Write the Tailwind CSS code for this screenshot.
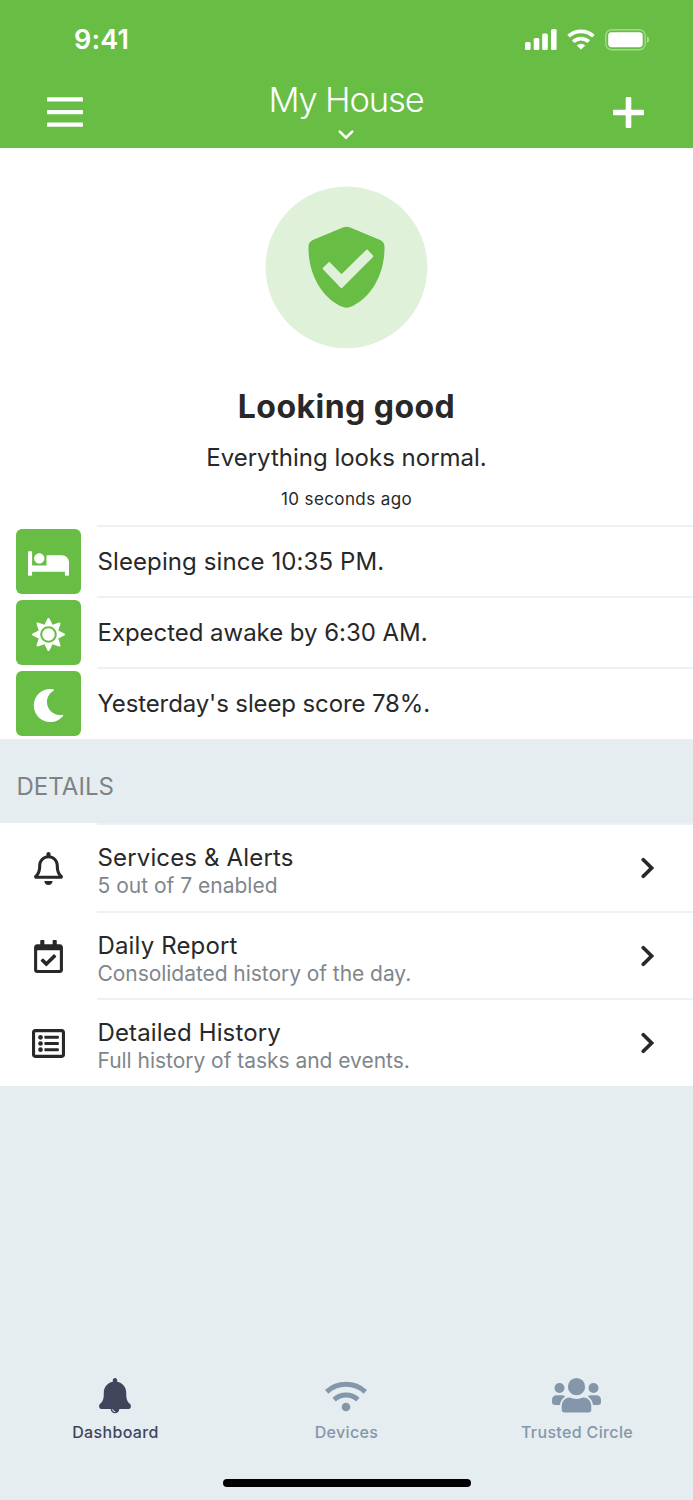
<!DOCTYPE html>
<html lang="en">
<head>
<meta charset="utf-8">
<title>My House</title>
<script src="https://cdn.jsdelivr.net/npm/@tailwindcss/browser@4"></script>
</head>
<body class="bg-[#e5edf1]">
<div class="w-[693px] h-[1500px] flex flex-col overflow-hidden font-['Inter',sans-serif] text-[#282829] bg-[#e5edf1] whitespace-nowrap">
  <header class="h-[148px] shrink-0 bg-[#68bd45] text-white flex flex-col">
    <div class="h-[78px] shrink-0 flex items-center justify-between pl-[74px] pr-[44.500px] pt-[1px]">
      <span class="text-[27px] leading-[30px] font-semibold tracking-[0.200px] pt-[1px]">9:41</span>
      <div class="flex items-center">
        <svg class="w-[32px] h-[21px]" viewBox="0 0 32 21" fill="currentColor"><rect x="0" y="13" width="5.6" height="8" rx="1.5"/><rect x="8.7" y="9" width="5.6" height="12" rx="1.5"/><rect x="17.2" y="4.4" width="5.6" height="16.6" rx="1.5"/><rect x="26" y="0" width="5.6" height="21" rx="1.5"/></svg>
        <svg class="w-[28px] h-[21px] ml-[10px]" viewBox="0 0 28 21" fill="none" stroke="currentColor" stroke-width="3.8"><path d="M1.6 7.2a18.2 18.2 0 0 1 24.8 0"/><path d="M6.2 12.600a11.6 11.6 0 0 1 15.6 0"/><path d="M14 20.500l-4.3-4.1a6.5 6.5 0 0 1 8.6 0z" fill="currentColor" stroke="none"/></svg>
        <svg class="w-[44px] h-[22px] ml-[10px]" viewBox="0 0 44 22" fill="none"><rect x=".75" y=".75" width="39.5" height="20" rx="5.8" stroke="#fff" stroke-opacity=".4" stroke-width="1.4"/><rect x="3.2" y="3.2" width="34.5" height="15" rx="3.4" fill="#fff"/><path d="M42 7.5c3 1.2 3 5.400 0 6.600z" fill="#fff" fill-opacity=".45"/></svg>
      </div>
    </div>
    <div class="h-[70px] flex items-start justify-between pl-[47px] pr-[49px]">
      <svg class="w-[36px] h-[30px] mt-[19px]" viewBox="0 0 36 30" fill="currentColor"><rect y=".3" width="36" height="4.300" rx=".9"/><rect y="12.900" width="36" height="4.300" rx=".9"/><rect y="25.500" width="36" height="4.300" rx=".9"/></svg>
      <div class="flex flex-col items-center ml-[-4px]">
        <h1 class="text-[34.500px] leading-[44px] font-[350] tracking-[-1.150px]">My House</h1>
        <svg class="w-[16px] h-[10px] mt-[8px]" viewBox="0 0 16 10" fill="none" stroke="currentColor" stroke-width="2.600" stroke-linecap="round"><path d="M1.800 1.600L8 7.600l6.200-6"/></svg>
      </div>
      <svg class="w-[31px] h-[31px] mt-[19px]" viewBox="0 0 31 31" fill="currentColor"><rect x="12.700" width="5.600" height="31" rx="1"/><rect y="12.700" width="31" height="5.600" rx="1"/></svg>
    </div>
  </header>

  <main class="flex flex-col">
    <section class="h-[377px] shrink-0 bg-white flex flex-col items-center pt-[38px]">
      <svg class="size-[163px]" viewBox="0 0 163 163"><circle cx="81.500" cy="81.300" r="80.900" fill="#e0f1da"/><path transform="translate(43.500 40.500)" d="M34.300 .9Q38 -.5 41.700 .9L71.700 13.600Q76 15.500 76 20.500C76.500 49 61 73 41.500 80.600Q38 82 34.500 80.600C15 73 -.5 49 0 20.500Q0 15.500 4.300 13.600z" fill="#68bd45"/><path transform="translate(43.500 40.500)" d="M15.800 42L20.700 37.200 33 49.800 58.500 24.700 63.200 29.700 33 60z" fill="#e0f1da" stroke="#e0f1da" stroke-width="3" stroke-linejoin="round"/></svg>
      <h2 class="mt-[36px] text-[32px] leading-[44px] font-bold tracking-[0.450px]">Looking good</h2>
      <p class="mt-[12px] text-[24px] leading-[34px] tracking-[0px]">Everything looks normal.</p>
      <p class="mt-[12px] text-[17px] leading-[24px] tracking-[0.4px]">10 seconds ago</p>
    </section>

    <ul class="h-[214px] shrink-0 bg-white flex flex-col text-[24px]">
      <li class="h-[71px] flex items-center pl-[16px]">
        <span class="size-[65px] mt-[2px] rounded-[6px] bg-[#68bd45] flex items-center justify-center shrink-0 text-white"><svg class="w-[41px] h-[33px] mt-[4px]" viewBox="0 0 640 512" fill="currentColor"><path d="M176 256c44.110 0 80-35.890 80-80s-35.890-80-80-80-80 35.890-80 80 35.890 80 80 80zm352-128H304c-8.840 0-16 7.160-16 16v144H64V80c0-8.840-7.160-16-16-16H16C7.160 64 0 71.160 0 80v352c0 8.840 7.160 16 16 16h32c8.840 0 16-7.160 16-16v-48h512v48c0 8.840 7.160 16 16 16h32c8.840 0 16-7.160 16-16V240c0-61.860-50.140-112-112-112z"/></svg></span>
        <span class="ml-[16px] flex-1 h-full border-t-2 border-[#ebf1f4] flex items-center pl-[0.500px] tracking-[0.100px]">Sleeping since 10:35 PM.</span>
      </li>
      <li class="h-[71px] flex items-center pl-[16px]">
        <span class="size-[65px] mt-[2px] rounded-[6px] bg-[#68bd45] flex items-center justify-center shrink-0 text-white"><svg class="size-[33px] mt-[4px]" viewBox="0 0 512 512" fill="currentColor"><path d="M256 160c-52.900 0-96 43.100-96 96s43.100 96 96 96 96-43.100 96-96-43.100-96-96-96zm246.400 80.500l-94.700-47.300 33.500-100.400c4.500-13.600-8.400-26.500-21.900-21.900l-100.400 33.500-47.400-94.800c-6.400-12.800-24.600-12.800-31 0l-47.300 94.700L92.700 70.800c-13.600-4.500-26.500 8.400-21.900 21.900l33.500 100.400-94.700 47.400c-12.800 6.400-12.800 24.600 0 31l94.700 47.300-33.500 100.500c-4.500 13.600 8.400 26.500 21.900 21.900l100.400-33.500 47.300 94.700c6.400 12.800 24.600 12.800 31 0l47.300-94.700 100.400 33.500c13.600 4.500 26.500-8.400 21.900-21.900l-33.500-100.400 94.700-47.300c13-6.500 13-24.700.2-31.100zm-155.900 106c-49.900 49.900-131.100 49.900-181 0-49.900-49.900-49.900-131.100 0-181 49.900-49.900 131.100-49.900 181 0 49.900 49.900 49.900 131.100 0 181z"/></svg></span>
        <span class="ml-[16px] flex-1 h-full border-t-2 border-[#ebf1f4] flex items-center pl-[0.500px] tracking-[-0.040px]">Expected awake by 6:30 AM.</span>
      </li>
      <li class="h-[71px] flex items-center pl-[16px]">
        <span class="size-[65px] mt-[2px] rounded-[6px] bg-[#68bd45] flex items-center justify-center shrink-0 text-white"><svg class="size-[33px] mt-[4px]" viewBox="0 0 512 512" fill="currentColor"><path d="M283.211 512c78.962 0 151.079-35.925 198.857-94.792 7.068-8.708-.639-21.430-11.562-19.350-124.203 23.654-238.262-71.576-238.262-196.954 0-72.222 38.662-138.635 101.498-174.394 9.686-5.512 7.250-20.197-3.756-22.230A258.156 258.156 0 0 0 283.211 0c-141.309 0-256 114.511-256 256 0 141.309 114.511 256 256 256z"/></svg></span>
        <span class="ml-[16px] flex-1 h-full border-t-2 border-[#ebf1f4] flex items-center pl-[0.500px] tracking-[-0.120px]">Yesterday's sleep score 78%.</span>
      </li>
    </ul>

    <h3 class="h-[84px] shrink-0 pl-[16.500px] pt-[31px] text-[24px] leading-[34px] text-[#7c8386] tracking-[0.050px]">DETAILS</h3>

    <ul class="h-[263px] shrink-0 bg-white flex flex-col">
      <li class="h-[87.500px] flex">
        <span class="w-[97px] flex items-center justify-center shrink-0"><svg class="w-[29px] h-[33px] mt-[4px]" viewBox="0 0 448 512" fill="currentColor"><path d="M439.390 362.290c-19.320-20.760-55.470-51.990-55.470-154.290 0-77.700-54.480-139.900-127.940-155.160V32c0-17.670-14.320-32-31.980-32s-31.980 14.330-31.980 32v20.840C118.560 68.100 64.080 130.300 64.080 208c0 102.300-36.150 133.530-55.470 154.290-6 6.450-8.660 14.160-8.610 21.710.11 16.400 12.980 32 32.100 32h383.800c19.120 0 32-15.600 32.100-32 .05-7.550-2.610-15.270-8.610-21.710zM67.530 368c21.220-27.970 44.420-74.330 44.530-159.420 0-.2-.06-.38-.06-.58 0-61.860 50.140-112 112-112s112 50.140 112 112c0 .2-.06.38-.06.58.11 85.100 23.310 131.460 44.530 159.420H67.530zM224 512c35.320 0 63.970-28.650 63.970-64H160.030c0 35.350 28.650 64 63.970 64z"/></svg></span>
        <div class="flex-1 border-t-2 border-[#ebf1f4] flex items-center justify-between pl-[0.500px] pr-[39.500px]">
          <div class="pt-[9px]"><div class="text-[24px] leading-[28px] tracking-[0.150px]">Services &amp; Alerts</div><div class="text-[21px] leading-[28px] tracking-[0px] text-[#7f868b]">5 out of 7 enabled</div></div>
          <svg class="w-[13px] h-[22px] mt-[1px]" viewBox="0 0 13 22" fill="none" stroke="currentColor" stroke-width="3.700" stroke-linecap="round"><path d="M2.300 2.800L10.600 11l-8.300 8.200"/></svg>
        </div>
      </li>
      <li class="h-[87.500px] flex">
        <span class="w-[97px] flex items-center justify-center shrink-0"><svg class="w-[29px] h-[33px] mt-[4px]" viewBox="0 0 448 512" fill="currentColor"><path d="M400 64h-48V12c0-6.627-5.373-12-12-12h-40c-6.627 0-12 5.373-12 12v52H160V12c0-6.627-5.373-12-12-12h-40c-6.627 0-12 5.373-12 12v52H48C21.490 64 0 85.490 0 112v352c0 26.510 21.490 48 48 48h352c26.510 0 48-21.490 48-48V112c0-26.510-21.490-48-48-48zm-6 400H54a6 6 0 0 1-6-6V160h352v298a6 6 0 0 1-6 6zm-52.849-200.650L198.842 404.519c-4.705 4.667-12.303 4.637-16.971-.068l-75.091-75.699c-4.667-4.705-4.637-12.303.068-16.971l22.719-22.536c4.705-4.667 12.303-4.637 16.970.069l44.104 44.461 111.072-110.181c4.705-4.667 12.303-4.637 16.971.068l22.536 22.718c4.667 4.705 4.636 12.303-.069 16.970z"/></svg></span>
        <div class="flex-1 border-t-2 border-[#ebf1f4] flex items-center justify-between pl-[0.500px] pr-[39.500px]">
          <div class="pt-[9px]"><div class="text-[24px] leading-[28px] tracking-[0.150px]">Daily Report</div><div class="text-[21px] leading-[28px] tracking-[-0.050px] text-[#7f868b]">Consolidated history of the day.</div></div>
          <svg class="w-[13px] h-[22px] mt-[1px]" viewBox="0 0 13 22" fill="none" stroke="currentColor" stroke-width="3.700" stroke-linecap="round"><path d="M2.300 2.800L10.600 11l-8.300 8.200"/></svg>
        </div>
      </li>
      <li class="h-[87.500px] flex">
        <span class="w-[97px] flex items-center justify-center shrink-0"><svg class="size-[33px] mt-[4px]" viewBox="0 0 512 512" fill="currentColor"><path fill-rule="evenodd" d="M464 32H48C21.490 32 0 53.490 0 80v352c0 26.510 21.490 48 48 48h416c26.510 0 48-21.490 48-48V80c0-26.510-21.490-48-48-48zm-6 400H54a6 6 0 0 1-6-6V86a6 6 0 0 1 6-6h404a6 6 0 0 1 6 6v340a6 6 0 0 1-6 6z"/><circle cx="132" cy="160" r="36"/><circle cx="132" cy="256" r="36"/><circle cx="132" cy="352" r="36"/><rect x="192" y="136" width="224" height="48" rx="12"/><rect x="192" y="232" width="224" height="48" rx="12"/><rect x="192" y="328" width="224" height="48" rx="12"/></svg></span>
        <div class="flex-1 border-t-2 border-[#ebf1f4] flex items-center justify-between pl-[0.500px] pr-[39.500px]">
          <div class="pt-[9px]"><div class="text-[24px] leading-[28px] tracking-[0.150px]">Detailed History</div><div class="text-[21px] leading-[28px] tracking-[-0.030px] text-[#7f868b]">Full history of tasks and events.</div></div>
          <svg class="w-[13px] h-[22px] mt-[1px]" viewBox="0 0 13 22" fill="none" stroke="currentColor" stroke-width="3.700" stroke-linecap="round"><path d="M2.300 2.800L10.600 11l-8.300 8.200"/></svg>
        </div>
      </li>
    </ul>
  </main>

  <footer class="mt-auto h-[126px] shrink-0 flex flex-col items-center">
    <nav class="w-full grid grid-cols-3 text-[16px] leading-[24px] font-medium tracking-[0.350px] text-[#8496aa]">
      <a class="flex flex-col items-center text-[#40455b]">
        <svg class="w-[32px] h-[36px] mt-[4px] mr-[1px]" viewBox="0 0 32 36" fill="currentColor"><path d="M16 0c1.300 0 2.200 1 2.200 2.200v1.500c5.200 1 9 5.300 9 10.800 0 6.500.6 8.600 3.900 11.600 1.600 1.600.8 4.900-1.500 4.900H20.300a4.300 4.300 0 0 1-8.600 0H2.400C.1 31-.7 27.700.9 26.100c3.300-3 3.900-5.100 3.900-11.600 0-5.500 3.800-9.800 9-10.800V2.200C13.800 1 14.700 0 16 0z"/><path d="M13.600 31.200a2.500 2.500 0 0 0 2.600 2.400" fill="none" stroke="#e5edf1" stroke-width="1"/></svg>
        <span class="mt-[6px]">Dashboard</span>
      </a>
      <a class="flex flex-col items-center">
        <svg class="w-[42px] h-[36px] mt-[4px] mr-[1px]" viewBox="0 0 42 36" fill="none" stroke="currentColor" stroke-width="5"><path d="M1.700 13.800a28.500 28.500 0 0 1 38.600 0"/><path d="M9.100 21.600a18 18 0 0 1 23.800 0"/><circle cx="21" cy="29" r="4.300" fill="currentColor" stroke="none"/></svg>
        <span class="mt-[6px]">Devices</span>
      </a>
      <a class="flex flex-col items-center">
        <svg class="w-[49px] h-[36px] mt-[4px] mr-[2px]" viewBox="0 0 49 36" fill="currentColor"><circle cx="24.500" cy="8.700" r="8.600"/><circle cx="7.500" cy="10" r="5"/><circle cx="41.500" cy="10" r="5"/><path d="M17.700 19.600q6.800 2.800 13.600 0c5 0 8 4 8 9V31.500q0 3-3 3H12.700q-3 0-3-3V28.600c0-5 3-9 8-9z"/><path d="M5 17.300H9.500q2.200 0 3.800 1.300c-3 1.800-4.800 4.700-5.400 8.400H2.500Q0 27 0 24.600V22.300Q0 17.300 5 17.300z"/><path d="M44 17.300H39.500q-2.200 0-3.800 1.300c3 1.800 4.800 4.700 5.400 8.400H46.500Q49 27 49 24.600V22.300Q49 17.300 44 17.300z"/></svg>
        <span class="mt-[6px] mr-[1px]">Trusted Circle</span>
      </a>
    </nav>
    <div class="mt-[34.500px] w-[248px] h-[8px] rounded-full bg-black"></div>
  </footer>
</div>
</body>
</html>
